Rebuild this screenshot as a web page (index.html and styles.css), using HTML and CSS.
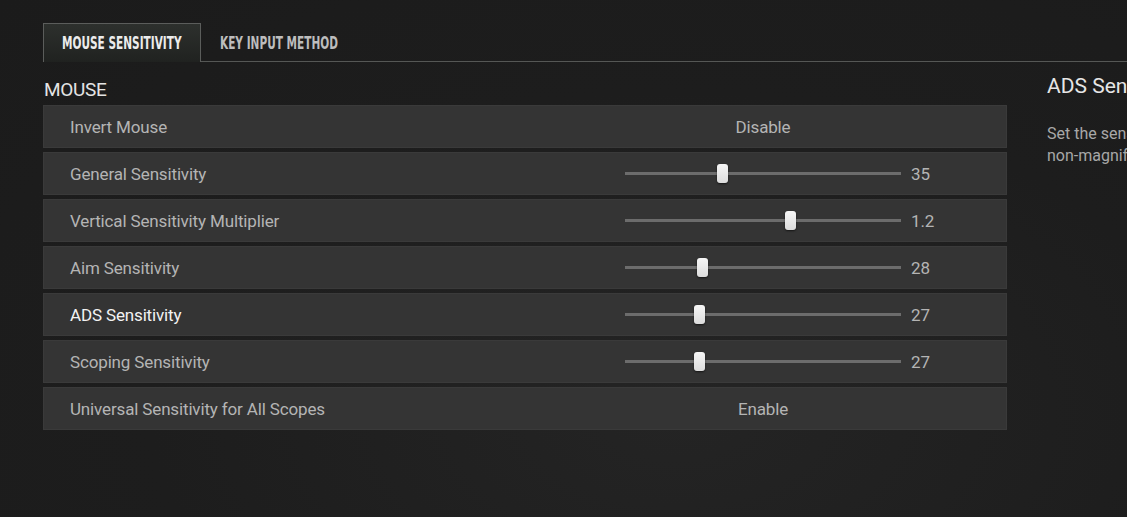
FILE: index.html
```html
<!DOCTYPE html>
<html>
<head>
  <title>Mouse Sensitivity</title>
  <meta charset="utf-8" />
  <link rel="stylesheet" href="styles.css">
</head>
<body>

  <div class="screen">
    <nav class="tabs">
      <div class="tab active"><span>MOUSE SENSITIVITY</span></div>
      <div class="tab"><span>KEY INPUT METHOD</span></div>
    </nav>

    <div class="content">
      <section class="settings">
        <h2>MOUSE</h2>

        <div class="row">
          <div class="label">Invert Mouse</div>
          <div class="choice">Disable</div>
        </div>

        <div class="row">
          <div class="label">General Sensitivity</div>
          <div class="slider"><div class="thumb" style="left: 35.1%"></div></div>
          <div class="value">35</div>
        </div>

        <div class="row">
          <div class="label">Vertical Sensitivity Multiplier</div>
          <div class="slider"><div class="thumb" style="left: 59.8%"></div></div>
          <div class="value">1.2</div>
        </div>

        <div class="row">
          <div class="label">Aim Sensitivity</div>
          <div class="slider"><div class="thumb" style="left: 27.9%"></div></div>
          <div class="value">28</div>
        </div>

        <div class="row selected">
          <div class="label">ADS Sensitivity</div>
          <div class="slider"><div class="thumb" style="left: 26.8%"></div></div>
          <div class="value">27</div>
        </div>

        <div class="row">
          <div class="label">Scoping Sensitivity</div>
          <div class="slider"><div class="thumb" style="left: 26.8%"></div></div>
          <div class="value">27</div>
        </div>

        <div class="row">
          <div class="label">Universal Sensitivity for All Scopes</div>
          <div class="choice">Enable</div>
        </div>
      </section>

      <aside class="info">
        <h3>ADS Sensitivity</h3>
        <p>
          <span>Set the sensitivity used when aiming down sights with</span>
          <span>non-magnified scopes and iron sights.</span>
        </p>
      </aside>
    </div>
  </div>

</body>
</html>
```

FILE: styles.css
```css
html, body {
  height: 100%;
  margin: 0;
  overflow: hidden;
}

body {
  font-family: Roboto, "Liberation Sans", sans-serif;
  background: radial-gradient(ellipse at 60% 80%, #242424 0%, #1d1d1d 55%, #1b1b1b 100%);
  color: #fff;
}

.screen {
  padding: 23px 0 0 43px;
}

/* tabs */
.tabs {
  display: flex;
  border-bottom: 1px solid #555755;
  height: 38px;
}

.tab {
  display: flex;
  align-items: center;
  padding: 0 18px;
  font-family: "DejaVu Sans", sans-serif;
  font-weight: bold;
  font-size: 17px;
  color: #bdbdbd;
  border: 1px solid transparent;
  border-bottom: none;
  margin-bottom: -1px;
}

.tab span {
  display: inline-block;
  transform: scaleX(0.62);
  transform-origin: left center;
  width: 120px;
  white-space: nowrap;
}

.tab.active {
  width: 120px;
  color: #ececec;
  border-color: #5b5d5b;
  background: linear-gradient(180deg, #2d302d 0%, #202220 100%);
}

/* main */
.content {
  display: flex;
  gap: 40px;
}

.settings {
  width: 964px;
  flex-shrink: 0;
}

.settings h2 {
  margin: 17px 0 4px 1px;
  font-size: 19px;
  font-weight: normal;
  line-height: 22px;
  letter-spacing: -0.3px;
  color: #e4e4e4;
}

.row {
  display: grid;
  grid-template-columns: 1fr 276px 60px;
  column-gap: 10px;
  align-items: center;
  height: 43px;
  margin-bottom: 4px;
  padding: 0 36px 0 27px;
  background: #343434;
  box-shadow: inset 0 0 0 1px rgba(255, 255, 255, 0.03);
  font-size: 17px;
  letter-spacing: -0.15px;
  color: #b4b4b4;
}

.row.selected .label {
  color: #f2f2f2;
}

.choice {
  grid-column: 2;
  text-align: center;
}

.slider {
  position: relative;
  height: 3px;
  background: #6c6c6c;
}

.thumb {
  position: absolute;
  top: -8px;
  width: 11px;
  height: 19px;
  margin-left: -5px;
  border-radius: 3px;
  background: linear-gradient(180deg, #f6f6f6 0%, #dcdcdc 100%);
  box-shadow: 0 1px 2px rgba(0, 0, 0, 0.6);
}

.value {
  color: #b4b4b4;
}

/* side panel */
.info {
  padding-top: 11px;
  white-space: nowrap;
}

.info h3 {
  margin: 0;
  font-size: 21px;
  font-weight: normal;
  line-height: 26px;
  color: #e6e6e6;
}

.info p {
  margin: 24px 0 0;
  font-size: 16px;
  line-height: 22px;
  color: #a8a8a8;
}

.info p span {
  display: block;
}
```
